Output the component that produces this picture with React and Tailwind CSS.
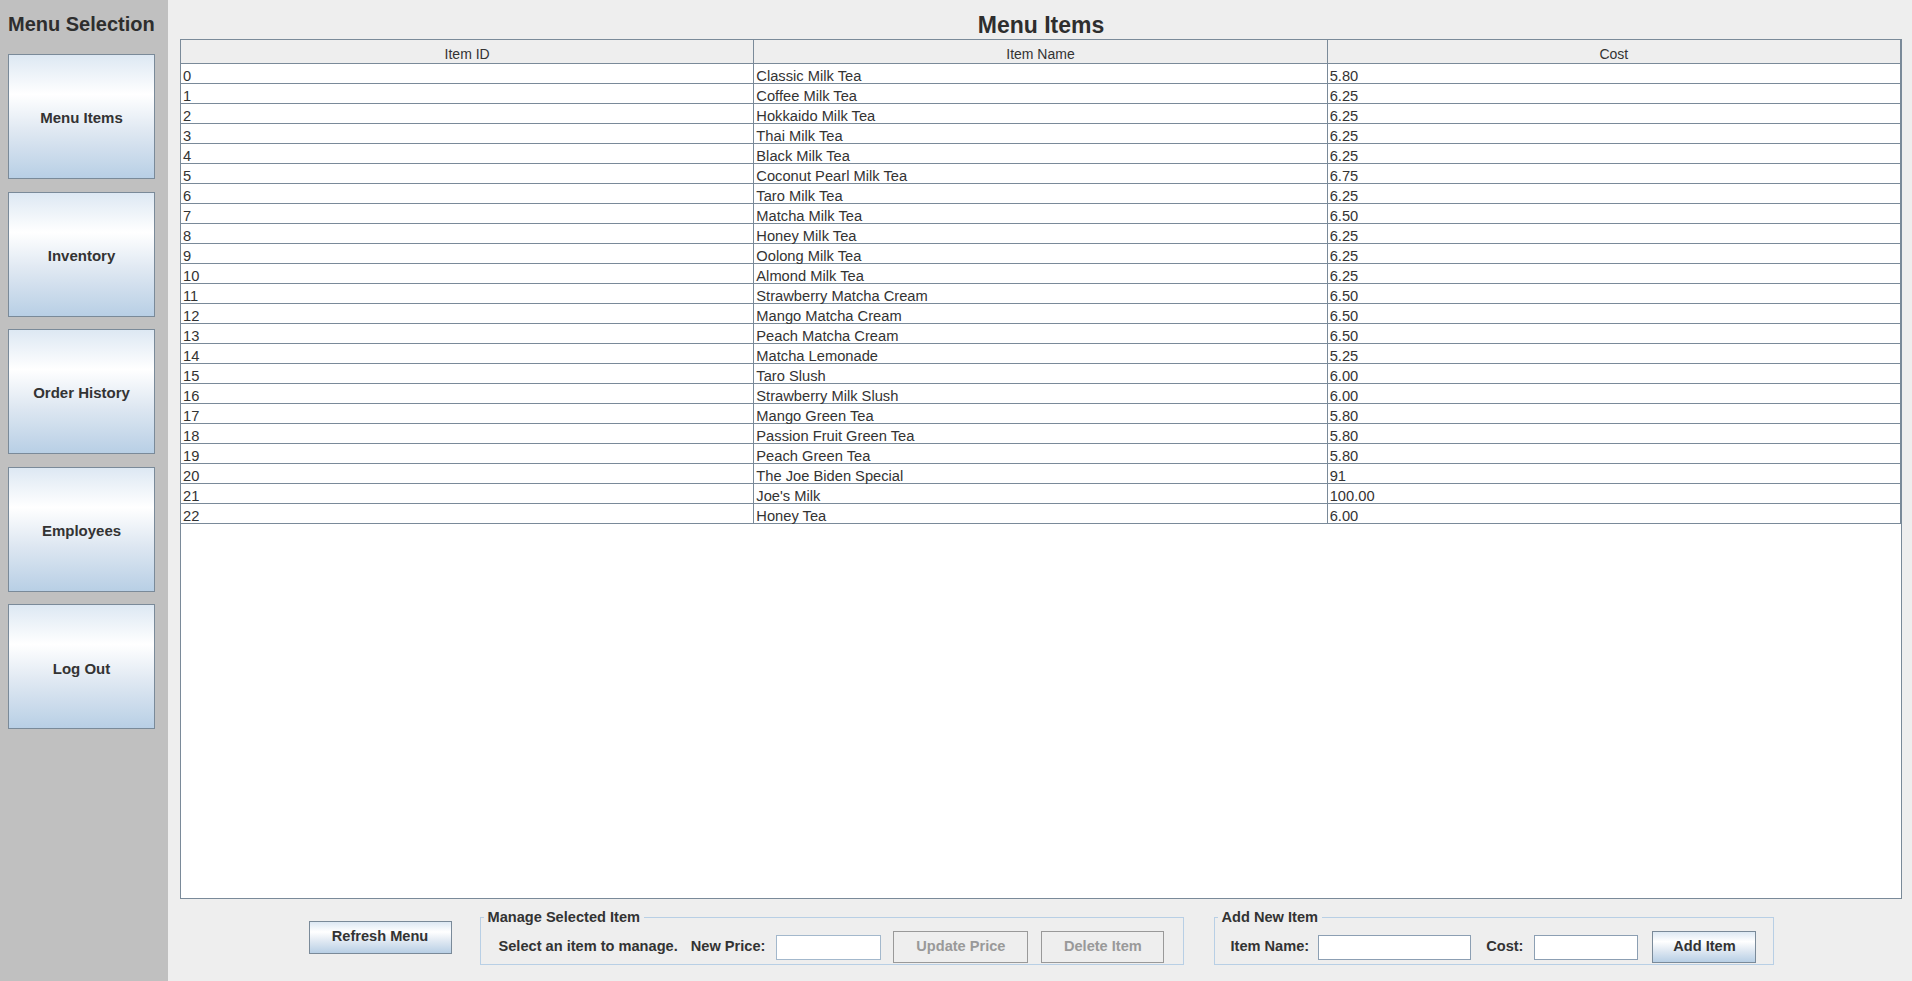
const menuItems = [
  [0, 'Classic Milk Tea', '5.80'],
  [1, 'Coffee Milk Tea', '6.25'],
  [2, 'Hokkaido Milk Tea', '6.25'],
  [3, 'Thai Milk Tea', '6.25'],
  [4, 'Black Milk Tea', '6.25'],
  [5, 'Coconut Pearl Milk Tea', '6.75'],
  [6, 'Taro Milk Tea', '6.25'],
  [7, 'Matcha Milk Tea', '6.50'],
  [8, 'Honey Milk Tea', '6.25'],
  [9, 'Oolong Milk Tea', '6.25'],
  [10, 'Almond Milk Tea', '6.25'],
  [11, 'Strawberry Matcha Cream', '6.50'],
  [12, 'Mango Matcha Cream', '6.50'],
  [13, 'Peach Matcha Cream', '6.50'],
  [14, 'Matcha Lemonade', '5.25'],
  [15, 'Taro Slush', '6.00'],
  [16, 'Strawberry Milk Slush', '6.00'],
  [17, 'Mango Green Tea', '5.80'],
  [18, 'Passion Fruit Green Tea', '5.80'],
  [19, 'Peach Green Tea', '5.80'],
  [20, 'The Joe Biden Special', '91'],
  [21, "Joe's Milk", '100.00'],
  [22, 'Honey Tea', '6.00']
];

const navItems = ['Menu Items', 'Inventory', 'Order History', 'Employees', 'Log Out'];

const gradient =
  'bg-[linear-gradient(to_bottom,#dde8f3_0%,#ffffff_32%,#dfe8f2_62%,#b8cfe5_100%)] border border-[#7a8a99]';

export default function App() {
  return (
    <div className="flex h-screen w-full font-['Liberation_Sans',Arial,sans-serif] text-[#333333]">
      <aside className="flex w-[168px] shrink-0 flex-col bg-[#c0c0c0] pl-[8px] pr-[13px]">
        <h1 className="pt-[12px] text-[20px] font-bold leading-[24px] text-[#2e2e2e]">Menu Selection</h1>
        <div className="mt-[18px] flex flex-col gap-[12.6px]">
          {navItems.map((label) => (
            <button
              key={label}
              className={`flex h-[125px] w-full items-center justify-center pt-[4px] text-[15px] font-bold ${gradient}`}
            >
              {label}
            </button>
          ))}
        </div>
      </aside>

      <main className="flex min-w-0 flex-1 flex-col bg-[#eeeeee]">
        <div className="flex min-h-0 flex-1 flex-col pl-[12px] pr-[10px]">
          <h2 className="mb-[1px] pt-[12px] text-center text-[23px] font-bold leading-[26px] text-[#2e2e2e]">
            Menu Items
          </h2>
          <div className="min-h-0 flex-1 border border-[#7a8a99] bg-white">
            <div className="grid grid-cols-3 bg-[#eeeeee] text-[14px]">
              {['Item ID', 'Item Name', 'Cost'].map((h) => (
                <div
                  key={h}
                  className="flex h-[24px] items-center justify-center border-b border-r border-[#7a8a99] pt-[6px]"
                >
                  {h}
                </div>
              ))}
            </div>
            {menuItems.map(([id, name, cost]) => (
              <div key={id} className="grid grid-cols-3 text-[14.7px]">
                {[id, name, cost].map((v, i) => (
                  <div
                    key={i}
                    className="flex h-[20px] items-center border-b border-r border-[#7a8a99] pl-[2px] pt-[5px]"
                  >
                    {v}
                  </div>
                ))}
              </div>
            ))}
          </div>
        </div>

        <div className="flex h-[82px] shrink-0 items-center justify-center whitespace-nowrap pb-[6px] pl-[2px]">
          <button className={`h-[33px] w-[143px] shrink-0 text-[14.6px] font-bold ${gradient}`}>Refresh Menu</button>

          <fieldset className="ml-[28px] flex w-[704px] shrink-0 items-center border border-[#b8cfe5] pb-[1px] pl-[18px] pr-[17px] pt-[5px]">
            <legend className="ml-[-15px] px-[4px] text-[14.6px] font-bold leading-[17px]">Manage Selected Item</legend>
            <div className="flex items-center text-[14.6px] font-bold">
              <span className="shrink-0">Select an item to manage.</span>
              <span className="ml-[13px] shrink-0">New Price:</span>
              <input className="ml-[11px] h-[25px] w-[105px] shrink-0 border border-[#a3b8cc] bg-white" />
              <button className="ml-[12px] h-[32px] w-[135px] shrink-0 border border-[#999999] text-[#999999]">
                Update Price
              </button>
              <button className="ml-[13px] h-[32px] w-[123px] shrink-0 border border-[#999999] text-[#999999]">
                Delete Item
              </button>
            </div>
          </fieldset>

          <fieldset className="ml-[30px] flex w-[560px] shrink-0 items-center border border-[#b8cfe5] pb-[1px] pl-[16px] pr-[15px] pt-[5px]">
            <legend className="ml-[-13px] px-[4px] text-[14.6px] font-bold leading-[17px]">Add New Item</legend>
            <div className="flex items-center text-[14.6px] font-bold">
              <span className="shrink-0">Item Name:</span>
              <input className="ml-[9px] h-[25px] w-[153px] shrink-0 border border-[#8c9fb3] bg-white" />
              <span className="ml-[15px] shrink-0">Cost:</span>
              <input className="ml-[11px] h-[25px] w-[104px] shrink-0 border border-[#8c9fb3] bg-white" />
              <button className={`ml-[14px] h-[32px] w-[104px] shrink-0 ${gradient}`}>Add Item</button>
            </div>
          </fieldset>
        </div>
      </main>
    </div>
  );
}
